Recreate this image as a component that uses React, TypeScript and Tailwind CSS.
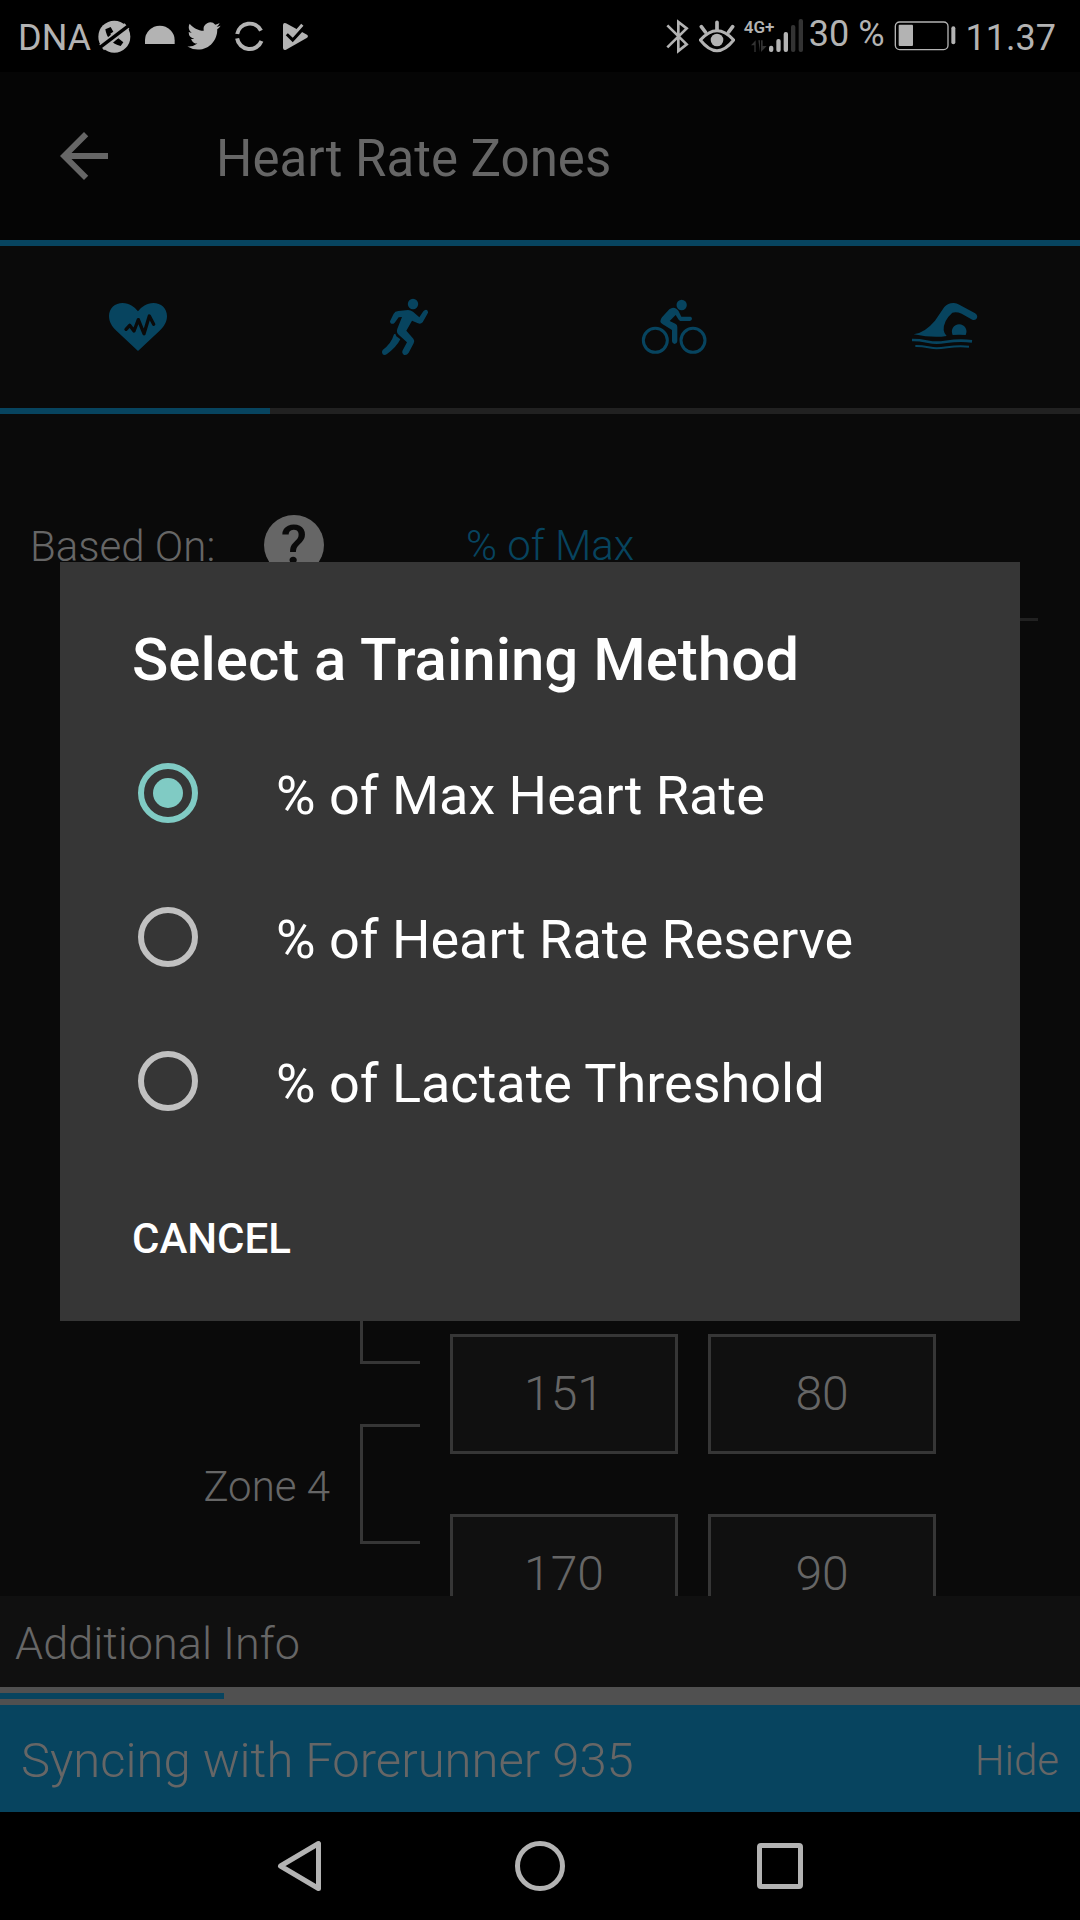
import React, { useState } from 'react';

const METHODS = [
  { id: 'max', label: '% of Max Heart Rate' },
  { id: 'reserve', label: '% of Heart Rate Reserve' },
  { id: 'lactate', label: '% of Lactate Threshold' },
];

const ZONES = ['Zone 3', 'Zone 4'];

const LIMITS = [
  { bpm: 132, percent: 70 },
  { bpm: 151, percent: 80 },
  { bpm: 170, percent: 90 },
];

function HeartIcon() {
  return (
    <svg viewBox="57 51 216 180" className="w-[72px] h-[60px]" fill="currentColor">
      <path d="M174 213 L110 153 C95 139 87 125 87 108 C87 85 105 69 128 69 C148 69 163 80 174 94 C185 80 200 69 220 69 C243 69 261 85 261 108 C261 125 253 139 238 153 Z" />
      <path d="M138 148 L149 136 L162 153 L175 119 L192 161 L208 108 L221 133" fill="none" stroke="#0a0a0a" strokeWidth="10" strokeLinecap="round" strokeLinejoin="round" />
    </svg>
  );
}

function RunIcon() {
  return (
    <svg viewBox="867 51 216 180" className="w-[72px] h-[60px]" fill="currentColor">
      <circle cx="999" cy="72" r="15.5" />
      <path d="M930 124 L941 101 Q945 94 955 93 L984 90 Q992 90 999 95 L1018 112 L1030 94 Q1037 86 1043 92 Q1046 97 1042 102 L1028 127 Q1022 134 1014 130 L996 122 L979 152 L1000 176 Q1005 182 1001 190 L986 218 Q980 227 971 224 Q965 220 967 213 L981 187 L956 164 Q948 156 952 146 L966 111 L956 112 L944 128 Q938 134 932 130 Q930 127 930 124 Z" />
      <path d="M946 161 L949 169 L961 178 Q949 202 921 222 Q914 227 908 223 Q903 217 908 210 Q934 191 942 163 Z" />
    </svg>
  );
}

function BikeIcon() {
  return (
    <svg viewBox="117 51 216 180" className="w-[72px] h-[60px]" fill="currentColor">
      <circle cx="166" cy="181" r="36" fill="none" stroke="currentColor" strokeWidth="9" />
      <circle cx="279" cy="181" r="36" fill="none" stroke="currentColor" strokeWidth="9" />
      <circle cx="245" cy="75" r="15.5" />
      <path d="M181 124 Q181 119 186 112 L208 88 Q218 80 229 86 Q234 89 236 94 L244 110 L272 110 Q277 112 276 117 Q275 122 270 123 L241 123 Q237 122 235 118 L227 105 L209 123 L226 131 Q232 134 232 141 L232 184 Q231 192 224 192 Q217 192 216 184 L216 150 L187 132 Q181 129 181 124 Z" />
    </svg>
  );
}

function SwimIcon() {
  return (
    <svg viewBox="927 51 216 180" className="w-[72px] h-[60px]" fill="currentColor">
      <path d="M941 163 Q975 158 1005 122 L1033 81 Q1045 68 1062 69 Q1070 70 1078 74 L1124 99 Q1134 105 1131 114 Q1127 122 1117 119 L1085 101 Q1070 95 1057 98 Q1030 122 1031 150 Q1032 160 1040 168 Q1000 175 941 163 Z" />
      <path d="M1058 165 A22 22 0 1 1 1097 165 Q1077 163 1058 165 Z" />
      <path d="M936 180 C970 179 985 188 1010 188 C1040 188 1060 177 1116 184" fill="none" stroke="currentColor" strokeWidth="8" />
      <path d="M946 198 C975 197 990 205 1010 205 C1040 205 1060 194 1107 200" fill="none" stroke="currentColor" strokeWidth="6" />
    </svg>
  );
}

const TABS = [
  { id: 'heart', label: 'Heart rate', Icon: HeartIcon },
  { id: 'run', label: 'Running', Icon: RunIcon },
  { id: 'bike', label: 'Cycling', Icon: BikeIcon },
  { id: 'swim', label: 'Swimming', Icon: SwimIcon },
];

function StatusBar() {
  return (
    <header className="h-[72px] shrink-0 bg-black text-[#b3b3b3] text-[36px] leading-9 flex items-center justify-between pl-[18px] pr-6">
      {/* Carrier and notifications */}
      <div className="flex items-center gap-[9px]">
        <span className="pt-1 -mr-1">DNA</span>
        <svg viewBox="285 54 108 108" className="size-9" fill="currentColor">
          <circle cx="340" cy="110" r="48" />
          <path d="M313 88 L329 81 L337 95 L328 101 Q332 113 343 119 L352 115 L367 127 L359 138 Q319 128 313 88 Z" fill="#000" />
          <path d="M302 142 L378 78" stroke="#b3b3b3" strokeWidth="22" />
          <path d="M292 146 L388 73" stroke="#000" strokeWidth="10" />
        </svg>
        <svg viewBox="420 54 108 108" className="size-9" fill="currentColor">
          <path d="M432 132 V121 A44 43 0 0 1 521 121 V132 Z" />
        </svg>
        <svg viewBox="-1 -1 26 26" className="size-9" fill="currentColor">
          <path d="M23.953 4.57a10 10 0 01-2.825.775 4.958 4.958 0 002.163-2.723c-.951.555-2.005.959-3.127 1.184a4.92 4.92 0 00-8.384 4.482C7.69 8.095 4.067 6.13 1.64 3.162a4.822 4.822 0 00-.666 2.475c0 1.71.87 3.213 2.188 4.096a4.904 4.904 0 01-2.228-.616v.06a4.923 4.923 0 003.946 4.827 4.996 4.996 0 01-2.212.085 4.936 4.936 0 004.604 3.417 9.867 9.867 0 01-6.102 2.105c-.39 0-.779-.023-1.17-.067a13.995 13.995 0 007.557 2.209c9.053 0 13.998-7.496 13.998-13.985 0-.21 0-.42-.015-.63A9.935 9.935 0 0024 4.59z" />
        </svg>
        <svg viewBox="690 54 108 108" className="size-9" fill="none" stroke="currentColor" strokeWidth="12">
          <path d="M708.6 102 A38 38 0 0 1 780 92" />
          <path d="M708.4 115 A38 38 0 0 0 781.4 123" />
        </svg>
        <svg viewBox="825 54 108 108" className="size-9" fill="currentColor">
          <path d="M846 74 Q847 67 855 70 L918 104 Q924 109 917 114 L855 149 Q847 152 846 144 Z" />
          <path d="M860 100 L875 115 L905 82" fill="none" stroke="#000" strokeWidth="16" />
          <path d="M862 95 L875 107 L904 74" fill="none" stroke="#b3b3b3" strokeWidth="9" />
        </svg>
      </div>

      {/* System state */}
      <div className="flex items-center gap-[9px]">
        <svg viewBox="75 54 72 108" className="w-6 h-9" fill="none" stroke="currentColor" strokeWidth="8">
          <path d="M79 76 L137 133 L112 153 V66 L137 85 L79 142" />
        </svg>
        <svg viewBox="177 54 108 108" className="size-9" fill="none" stroke="currentColor" strokeWidth="9">
          <path d="M181 120 Q231 64 281 120 Q231 184 181 120 Z" />
          <circle cx="231" cy="120" r="19" fill="currentColor" stroke="none" />
          <path d="M231 67 V90 M184 80 L196 96 M278 80 L266 96" strokeWidth="11" strokeLinecap="round" />
        </svg>
        <div className="relative w-[60px] h-9">
          <svg viewBox="315 54 180 108" className="w-[60px] h-9" fill="currentColor">
            <path d="M336 136 L350 121 V156 H346 V136 Z M358 121 H363 V156 Z M366 121 H371 V138 H383 L366 156 Z" fill="#333" />
            <rect x="390" y="137" width="13" height="19" rx="6" />
            <rect x="412" y="117" width="13" height="39" rx="6" />
            <rect x="434" y="96" width="13" height="60" rx="6" />
            <rect x="456" y="75" width="13" height="81" rx="6" fill="#333" />
            <rect x="479" y="57" width="13" height="99" rx="6" fill="#333" />
          </svg>
          <span className="absolute left-0 top-0 text-[17px] leading-[18px] font-semibold">4G+</span>
        </div>
        <span className="pb-1 -ml-1">30 %</span>
        <svg viewBox="762 54 189 108" className="w-[63px] h-9" fill="currentColor">
          <rect x="766" y="66" width="158" height="83" rx="13" fill="none" stroke="currentColor" strokeWidth="4" />
          <rect x="776" y="74" width="43" height="64" rx="3" />
          <rect x="934" y="79" width="12" height="54" rx="6" />
        </svg>
        <span className="pt-1">11.37</span>
      </div>
    </header>
  );
}

function NavBar() {
  return (
    <nav className="h-[108px] shrink-0 bg-black text-[#b3b3b3] flex justify-center">
      <button aria-label="Back" className="w-60 flex items-center justify-center">
        <svg viewBox="0 0 60 60" className="size-[60px]" fill="none" stroke="currentColor" strokeWidth="5" strokeLinejoin="round">
          <path d="M10.500 30 L48.500 7.500 V52.500 Z" />
        </svg>
      </button>
      <button aria-label="Home" className="w-60 flex items-center justify-center">
        <span className="size-[50px] rounded-full border-5 border-[#b3b3b3]" />
      </button>
      <button aria-label="Recent apps" className="w-60 flex items-center justify-center">
        <span className="size-[46px] rounded-sm border-5 border-[#b3b3b3]" />
      </button>
    </nav>
  );
}

function ZoneEditor() {
  return (
    <div className="flex-1 min-h-0 overflow-hidden bg-[#0a0a0a] text-[#666] font-light">
      <div className="mt-[54px] h-[153px] pl-[30px] pr-[42px] flex items-center text-[42px]">
        <label htmlFor="based-on" className="w-[234px] shrink-0 pt-1">Based On:</label>
        <button aria-label="Help" className="size-[60px] shrink-0 rounded-full bg-[#666] text-[#0a0a0a] text-[54px] font-medium flex items-center justify-center">?</button>
        <select id="based-on" className="ml-[126px] flex-1 h-full pl-4 pt-1 appearance-none bg-transparent border-b-3 border-[#212121] text-[#07445f] outline-none">
          <option>% of Max</option>
        </select>
      </div>

      <div className="mt-[533px] flex gap-[30px]">
        <div className="w-[420px] shrink-0 pt-[90px] flex flex-col gap-[60px]">
          {ZONES.map((zone) => (
            <div key={zone} className="h-[120px] flex items-center justify-end gap-[30px] text-[42px]">
              <span className="pt-1">{zone}</span>
              <span className="w-[60px] h-full border-3 border-r-0 border-[#363636]" />
            </div>
          ))}
        </div>
        <div className="flex flex-col gap-[60px]">
          {LIMITS.map((limit) => (
            <div key={limit.percent} className="flex gap-[30px] text-[48px]">
              <input
                aria-label={`Heart rate at ${limit.percent} %`}
                defaultValue={limit.bpm}
                className="w-[228px] h-[120px] pb-0.5 bg-[#101010] border-3 border-[#363636] text-center outline-none"
              />
              <input
                aria-label={`Percent for ${limit.bpm} bpm`}
                defaultValue={limit.percent}
                className="w-[228px] h-[120px] pb-0.5 bg-[#101010] border-3 border-[#363636] text-center outline-none"
              />
            </div>
          ))}
        </div>
      </div>
    </div>
  );
}

function MethodDialog() {
  const [method, setMethod] = useState('max');

  return (
    <div className="absolute inset-0 pb-px px-[60px] flex items-center">
      <div role="dialog" aria-labelledby="dialog-title" className="w-full bg-[#363636] text-white px-[72px] pt-[66px]">
        <h2 id="dialog-title" className="text-[60px] leading-[64px] font-medium">Select a Training Method</h2>
        <div className="mt-[29px]">
          {METHODS.map((m) => (
            <label key={m.id} className="h-36 pl-1.5 flex items-center gap-[78px] text-[54px]">
              <input
                type="radio"
                name="method"
                checked={method === m.id}
                onChange={() => setMethod(m.id)}
                className="appearance-none size-[60px] shrink-0 rounded-full border-6 border-[#c1c1c1] checked:border-[#80cbc4] flex items-center justify-center checked:before:block before:content-[''] before:size-[30px] before:rounded-full checked:before:bg-[#80cbc4]"
              />
              <span className="pt-1">{m.label}</span>
            </label>
          ))}
        </div>
        <div className="h-[168px] flex items-center">
          <button className="pt-0.5 text-[42px] font-medium">CANCEL</button>
        </div>
      </div>
    </div>
  );
}

export default function App() {
  const [tab, setTab] = useState('heart');

  return (
    <div className="h-screen flex flex-col bg-black font-['Roboto',sans-serif]">
      <StatusBar />

      <main className="relative flex-1 min-h-0 flex flex-col">
        {/* Toolbar */}
        <div className="h-[174px] shrink-0 bg-[#050505] border-b-6 border-[#07445f] text-[#666] flex items-center gap-24 pl-12">
          <button aria-label="Navigate up">
            <svg viewBox="0 0 24 24" className="size-[72px]" fill="currentColor">
              <path d="M20 11H7.83l5.59-5.59L12 4l-8 8 8 8 1.41-1.41L7.83 13H20v-2z" />
            </svg>
          </button>
          <h1 className="pt-1.5 text-[51px]">Heart Rate Zones</h1>
        </div>

        <div role="tablist" className="h-[168px] shrink-0 bg-[#0a0a0a] text-[#07445f] grid grid-cols-4">
          {TABS.map(({ id, label, Icon }) => (
            <button
              key={id}
              role="tab"
              aria-label={label}
              aria-selected={tab === id}
              onClick={() => setTab(id)}
              className={`flex items-center justify-center border-b-6 ${tab === id ? 'border-[#07445f]' : 'border-[#212121]'}`}
            >
              <Icon />
            </button>
          ))}
        </div>

        <ZoneEditor />

        <div className="h-[91px] shrink-0 bg-[#101010] text-[#666] text-[45px] font-light flex items-center pl-[15px] pt-1">
          Additional Info
        </div>

        {/* Sync progress */}
        <div className="h-[18px] shrink-0 bg-[#505050] flex items-center">
          <div className="h-1.5 bg-[#07445f]" style={{ width: '20.7%' }} />
        </div>
        <div className="h-[107px] shrink-0 bg-[#07445f] text-[#666] font-light flex items-center justify-between px-[21px] pt-1">
          <span className="text-[49px]">Syncing with Forerunner 935</span>
          <button className="text-[42px]">Hide</button>
        </div>

        <MethodDialog />
      </main>

      <NavBar />
    </div>
  );
}
